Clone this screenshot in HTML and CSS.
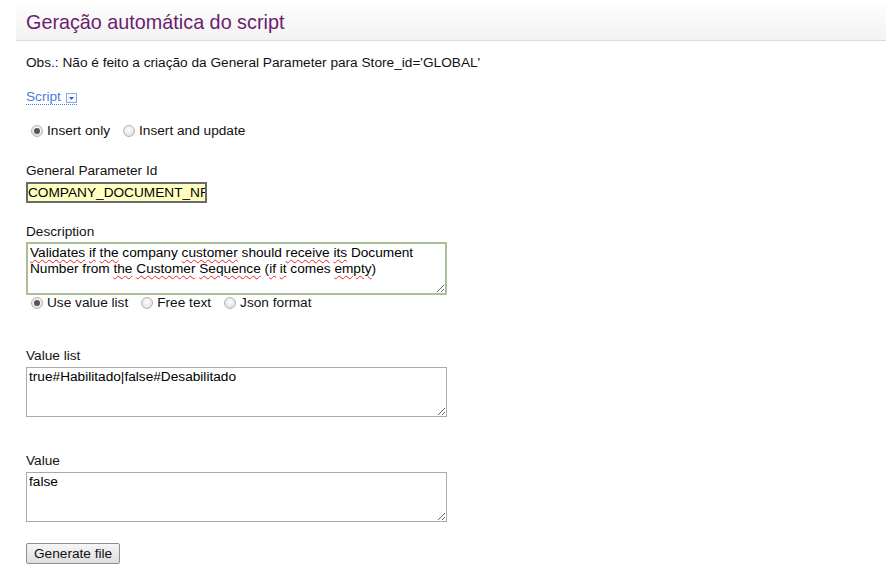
FILE: index.html
```html
<!DOCTYPE html>
<html lang="pt">
<head>
<meta charset="utf-8">
<title>Geração automática do script</title>
<link rel="stylesheet" href="styles.css">
</head>
<body>
<div class="page">
  <header class="header">
    <h1 class="title">Geração automática do script</h1>
  </header>
  <main class="content">
    <p class="obs">Obs.: Não é feito a criação da General Parameter para Store_id='GLOBAL'</p>
    <a class="script-link" href="#">Script <span class="toggle"><svg width="9" height="8" viewBox="0 0 9 8"><path d="M2 3h5L4.5 6z" fill="#3b63c4"/></svg></span></a>

    <div class="radios first-radios">
      <label class="radio"><span class="dot checked"></span>Insert only</label>
      <label class="radio"><span class="dot"></span>Insert and update</label>
    </div>

    <div class="field">
      <div class="label">General Parameter Id</div>
      <div class="text-input">COMPANY_DOCUMENT_NR</div>
    </div>

    <div class="field desc-field">
      <div class="label">Description</div>
      <div class="area area-desc"><span class="sp">Validates</span> <span class="sp">if</span> <span class="sp">the</span> company <span class="sp">customer</span> should <span class="sp">receive</span> <span class="sp">its</span> Document Number from <span class="sp">the</span> <span class="sp">Customer</span> <span class="sp">Sequence</span> (<span class="sp">if</span> <span class="sp">it</span> comes <span class="sp">empty</span>)</div>
      <div class="radios">
        <label class="radio"><span class="dot checked"></span>Use value list</label>
        <label class="radio"><span class="dot"></span>Free text</label>
        <label class="radio"><span class="dot"></span>Json format</label>
      </div>
    </div>

    <div class="field list-field">
      <div class="label">Value list</div>
      <div class="area">true#Habilitado|false#Desabilitado</div>
    </div>

    <div class="field value-field">
      <div class="label">Value</div>
      <div class="area">false</div>
    </div>

    <button class="btn" type="button">Generate file</button>
  </main>
</div>
</body>
</html>
```
FILE: styles.css
```css
html, body {
  margin: 0;
  padding: 0;
  background: #fff;
}
body {
  font-family: "Liberation Sans", Arial, sans-serif;
  font-size: 13.66px;
  color: #111;
}
.page {
  padding-left: 16px;
}
.header {
  height: 40px;
  border-bottom: 1px solid #dcdcdc;
  background: linear-gradient(#ffffff, #f2f2f3);
  padding-left: 10px;
  display: flex;
  align-items: center;
}
.title {
  margin: 0;
  font-weight: normal;
  font-size: 19.8px;
  color: #6d1c6f;
  padding-top: 5px;
}
.content {
  padding-left: 10px;
  display: flex;
  flex-direction: column;
  align-items: flex-start;
}
.obs {
  margin: 14px 0 0;
  line-height: 16px;
}
.script-link {
  margin-top: 19px;
  color: #4d7cdb;
  text-decoration: none;
  border-bottom: 1px dotted #4d7cdb;
  line-height: 14px;
  display: flex;
  align-items: center;
  gap: 4px;
}
.toggle {
  display: inline-flex;
  width: 9px;
  height: 8px;
  border: 1px solid #8fa8de;
  background: #f4f7ff;
  margin-top: 2px;
  margin-left: 1px;
}
.radios {
  display: flex;
  gap: 13px;
  line-height: 16px;
}
.first-radios {
  margin-top: 18px;
}
.radio {
  display: flex;
  align-items: center;
  gap: 4px;
  padding-left: 5px;
}
.radios .radio + .radio {
  padding-left: 0;
}
.dot {
  width: 12px;
  height: 12px;
  border-radius: 50%;
  border: 1px solid #b5b5b5;
  background: radial-gradient(circle at 50% 40%, #ffffff, #d6d6d6);
  box-sizing: border-box;
  display: inline-flex;
  align-items: center;
  justify-content: center;
}
.dot.checked::after {
  content: "";
  width: 6px;
  height: 6px;
  border-radius: 50%;
  background: #555;
}
.field {
  display: flex;
  flex-direction: column;
  align-items: flex-start;
  margin-top: 24px;
}
.label {
  line-height: 16px;
  margin-bottom: 3px;
}
.text-input {
  width: 177px;
  height: 17px;
  border: 2px solid #6a6a6a;
  background: #ffffc2;
  line-height: 17px;
  overflow: hidden;
  white-space: nowrap;
  color: #000;
}
.desc-field {
  margin-top: 21px;
}
.desc-field .label {
  margin-bottom: 2px;
}
.area {
  width: 415px;
  height: 44px;
  border: 1px solid #aaa;
  padding: 1px 2px 3px 2px;
  line-height: 15px;
  color: #000;
  resize: both;
  overflow: auto;
}
.area-desc {
  border: 2px solid #a9bf98;
  border-radius: 1px;
  width: 413px;
  height: 47px;
  padding: 1px 2px;
  line-height: 16px;
}
.sp {
  text-decoration: underline wavy #e22;
  text-decoration-thickness: 1px;
  text-underline-offset: 2px;
}
.list-field {
  margin-top: 37px;
}
.value-field {
  margin-top: 36px;
}
.btn {
  margin-top: 21px;
  font-family: "Liberation Sans", Arial, sans-serif;
  font-size: 13.66px;
  color: #111;
  height: 21px;
  padding: 0 7px;
  border: 1px solid #8e8e8e;
  border-radius: 2px;
  background: linear-gradient(#f6f6f6, #dedede);
}
```
